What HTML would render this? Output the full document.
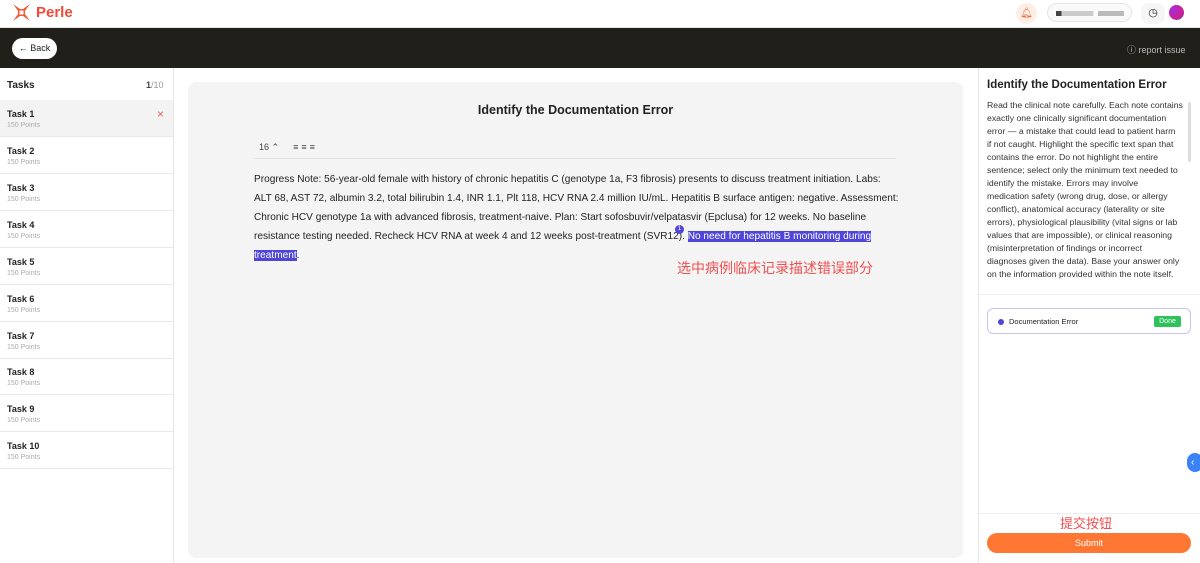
<!DOCTYPE html>
<html><head><meta charset="utf-8"><style>
*{box-sizing:border-box;margin:0;padding:0}
body{width:1200px;height:563px;overflow:hidden;font-family:"Liberation Sans","Noto Sans CJK SC",sans-serif;background:#fff;position:relative;color:#222}
.abs{position:absolute}
.top{left:0;top:0;width:1200px;height:28px;background:#fff;border-bottom:1px solid #e5e5e5}
.dark{left:0;top:28px;width:1200px;height:40px;background:#201f1a}
.side{left:0;top:68px;width:174px;height:495px;border-right:1px solid #e6e6e6}
.task{position:absolute;left:0;width:173px;height:37px;border-bottom:1px solid #e8e8e8;padding:9px 7px}
.task b{font-size:9px;display:block;color:#222}
.task span{font-size:7px;color:#aaa;display:block;margin-top:3px}
.card{left:188px;top:82px;width:775px;height:476px;background:#f4f4f4;border-radius:8px}
.txt{left:254px;top:170px;white-space:nowrap;font-size:10.1px;line-height:19px;color:#222}
.hl{background:#4f46d8;color:#fff}
.right{left:978px;top:68px;width:222px;height:495px;border-left:1px solid #e6e6e6}
</style></head><body>
<div class="abs top"></div>
<svg class="abs" style="left:13px;top:4px" width="17" height="17" viewBox="0 0 17 17"><path d="M0 0 L7 5 L10 5 L17 0 L12 7 L12 10 L17 17 L10 12 L7 12 L0 17 L5 10 L5 7Z" fill="#f25b3a"/><rect x="6.5" y="6.5" width="4" height="4" fill="#fff"/></svg>
<div class="abs" style="left:36px;top:4px;font-size:15px;font-weight:bold;color:#f04a3a">Perle</div>
<div class="abs" style="left:1016px;top:3px;width:21px;height:21px;border-radius:50%;background:#fdeee6;color:#f06a3a;font-size:10px;text-align:center;line-height:21px">🔔︎</div>
<div class="abs" style="left:1047px;top:3px;width:85px;height:19px;border-radius:10px;border:1px solid #e5e5e5;background:#fafafa"><div style="margin:7px 0 0 8px;width:68px;height:5px;background:linear-gradient(90deg,#444 0 8%,#ccc 8% 55%,#fff 55% 62%,#bbb 62%)"></div></div>
<div class="abs" style="left:1141px;top:3px;width:24px;height:21px;border-radius:8px;background:#f6f6f6;text-align:center;font-size:11px;line-height:21px">◷</div>
<div class="abs" style="left:1169px;top:5px;width:15px;height:15px;border-radius:50%;background:radial-gradient(circle at 30% 30%,#a030e0,#d02090 60%,#4040c0)"></div>
<div class="abs dark"></div>
<div class="abs" style="left:12px;top:38px;width:45px;height:21px;border-radius:11px;background:#fff;font-size:9px;line-height:21px;text-align:center">← Back</div>
<div class="abs" style="left:1127px;top:43px;font-size:9px;color:#bbb">ⓘ report issue</div>
<div class="abs side">
<div class="abs" style="left:7px;top:12px;font-size:10px;font-weight:bold">Tasks</div>
<div class="abs" style="left:146px;top:12px;font-size:9px;color:#999"><b style="color:#444">1</b>/10</div>
<div class="task" style="top:32px;background:#f3f3f3"><b>Task 1</b><span>150 Points</span><i style="position:absolute;right:9px;top:7px;color:#f06060;font-style:normal;font-size:12px">×</i></div>
<div class="task" style="top:69px"><b>Task 2</b><span>150 Points</span></div>
<div class="task" style="top:106px"><b>Task 3</b><span>150 Points</span></div>
<div class="task" style="top:143px"><b>Task 4</b><span>150 Points</span></div>
<div class="task" style="top:180px"><b>Task 5</b><span>150 Points</span></div>
<div class="task" style="top:217px"><b>Task 6</b><span>150 Points</span></div>
<div class="task" style="top:254px"><b>Task 7</b><span>150 Points</span></div>
<div class="task" style="top:290px"><b>Task 8</b><span>150 Points</span></div>
<div class="task" style="top:327px"><b>Task 9</b><span>150 Points</span></div>
<div class="task" style="top:364px"><b>Task 10</b><span>150 Points</span></div>
</div>
<div class="abs card"></div>
<div class="abs" style="left:188px;top:103px;width:775px;text-align:center;font-size:12.5px;font-weight:bold">Identify the Documentation Error</div>
<div class="abs" style="left:254px;top:142px;width:642px;height:17px;border-bottom:1px solid #e4e4e4;font-size:9px;color:#444"><span style="margin-left:5px">16 ⌃</span><span style="margin-left:14px;letter-spacing:3px">≡≡≡</span></div>
<div class="abs txt">Progress Note: 56-year-old female with history of chronic hepatitis C (genotype 1a, F3 fibrosis) presents to discuss treatment initiation. Labs:<br>ALT 68, AST 72, albumin 3.2, total bilirubin 1.4, INR 1.1, Plt 118, HCV RNA 2.4 million IU/mL. Hepatitis B surface antigen: negative. Assessment:<br>Chronic HCV genotype 1a with advanced fibrosis, treatment-naive. Plan: Start sofosbuvir/velpatasvir (Epclusa) for 12 weeks. No baseline<br>resistance testing needed. Recheck HCV RNA at week 4 and 12 weeks post-treatment (SVR12). <span class="hl">No need for hepatitis B monitoring during<br>treatment</span>.</div>
<div class="abs" style="left:675px;top:225px;width:9px;height:9px;border-radius:50%;background:#4f46d8;color:#fff;font-size:6px;text-align:center;line-height:9px">1</div>
<div class="abs" style="left:677px;top:258px;font-size:14px;color:#f05050">选中病例临床记录描述错误部分</div>
<div class="abs right">
<div class="abs" style="left:8px;top:11px;font-size:11.5px;font-weight:bold">Identify the Documentation Error</div>
<div class="abs" style="left:8px;top:31px;white-space:nowrap;font-size:8.7px;line-height:13px;color:#333">Read the clinical note carefully. Each note contains<br>exactly one clinically significant documentation<br>error — a mistake that could lead to patient harm<br>if not caught. Highlight the specific text span that<br>contains the error. Do not highlight the entire<br>sentence; select only the minimum text needed to<br>identify the mistake. Errors may involve<br>medication safety (wrong drug, dose, or allergy<br>conflict), anatomical accuracy (laterality or site<br>errors), physiological plausibility (vital signs or lab<br>values that are impossible), or clinical reasoning<br>(misinterpretation of findings or incorrect<br>diagnoses given the data). Base your answer only<br>on the information provided within the note itself.</div>
<div class="abs" style="left:209px;top:34px;width:3px;height:60px;background:#ddd;border-radius:2px"></div>
<div class="abs" style="left:0;top:226px;width:222px;border-top:1px solid #eee"></div>
<div class="abs" style="left:8px;top:240px;width:204px;height:26px;border:1px solid #c8c4f4;border-radius:6px"><div class="abs" style="left:10px;top:10px;width:6px;height:6px;border-radius:50%;background:#4f46d8"></div><div class="abs" style="left:21px;top:8px;font-size:7.5px">Documentation Error</div><div class="abs" style="left:166px;top:7px;width:27px;height:11px;background:#2ec25a;border-radius:2px;color:#fff;font-size:7px;text-align:center;line-height:11px">Done</div></div>
<div class="abs" style="left:0;top:445px;width:222px;border-top:1px solid #eee"></div>
<div class="abs" style="left:81px;top:445px;font-size:13px;color:#f05050">提交按钮</div>
<div class="abs" style="left:8px;top:465px;width:204px;height:20px;border-radius:10px;background:#fe7733;color:#fff;font-size:9px;text-align:center;line-height:20px">Submit</div>
</div>
<div class="abs" style="left:1187px;top:453px;width:16px;height:19px;border-radius:9px;background:#3b82f6;color:#fff;font-size:10px;line-height:19px;padding-left:4px">‹</div>
</body></html>
